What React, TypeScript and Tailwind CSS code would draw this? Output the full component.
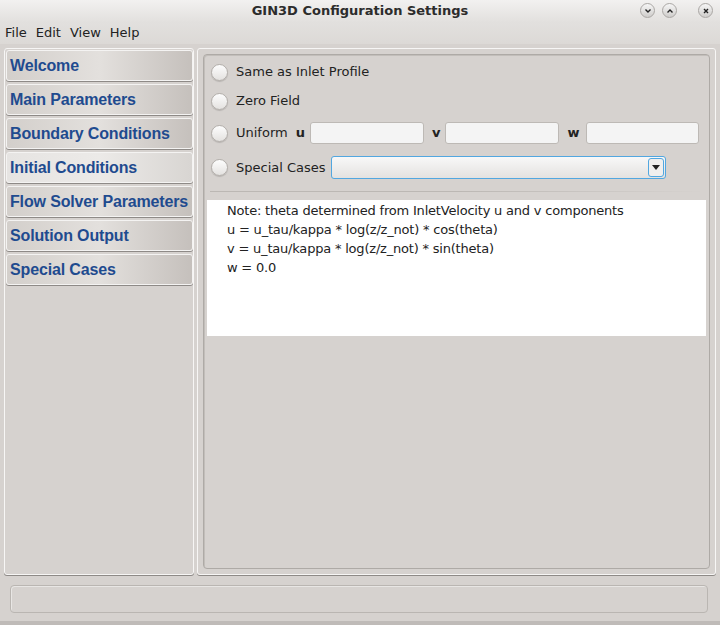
import React from 'react';

const navItems = [
  'Welcome',
  'Main Parameters',
  'Boundary Conditions',
  'Initial Conditions',
  'Flow Solver Parameters',
  'Solution Output',
  'Special Cases',
];

function Radio() {
  return (
    <div className="w-[17px] h-[17px] rounded-full border border-[#b3afab] bg-gradient-to-b from-[#fdfdfd] to-[#e4e2e0] shadow-[0_1px_1px_rgba(0,0,0,0.15)] shrink-0" />
  );
}

function TitleButton({ children }: { children: React.ReactNode }) {
  return (
    <div className="w-[15px] h-[15px] rounded-full bg-gradient-to-b from-[#f6f6f6] to-[#cfcdcb] border border-[#aaa7a4] flex items-center justify-center text-[#222]">
      {children}
    </div>
  );
}

function TextField({ width }: { width: string }) {
  return <div className={`${width} h-[22px] rounded-[3px] border border-[#bdb9b5] bg-[#f4f4f4]`} />;
}

export default function App() {
  return (
    <div
      className="w-[720px] h-[625px] bg-[#d6d2cf] flex flex-col text-[#222] overflow-hidden"
      style={{ fontFamily: '"DejaVu Sans", sans-serif' }}
    >
      {/* title bar */}
      <div className="h-[22px] relative flex items-center justify-center bg-gradient-to-b from-[#f2f1f0] to-[#e2e0de]">
        <span className="text-[13px] font-bold text-[#2c2c2c]">GIN3D Configuration Settings</span>
        <div className="absolute right-[7px] top-[3px] flex items-center">
          <TitleButton>
            <svg width="8" height="8" viewBox="0 0 8 8"><path d="M1.5 2.5 L4 5 L6.5 2.5" stroke="currentColor" strokeWidth="1.4" fill="none" /></svg>
          </TitleButton>
          <div className="w-[7px]" />
          <TitleButton>
            <svg width="8" height="8" viewBox="0 0 8 8"><path d="M1.5 5.5 L4 3 L6.5 5.5" stroke="currentColor" strokeWidth="1.4" fill="none" /></svg>
          </TitleButton>
          <div className="w-[21px]" />
          <TitleButton>
            <svg width="8" height="8" viewBox="0 0 8 8"><path d="M2 2 L6 6 M6 2 L2 6" stroke="currentColor" strokeWidth="1.4" fill="none" /></svg>
          </TitleButton>
        </div>
      </div>

      {/* menu bar */}
      <div className="h-[22px] flex items-center gap-[9px] px-[5px] text-[13px] bg-gradient-to-b from-[#e2e0de] to-[#dcd9d6]">
        <span>File</span>
        <span>Edit</span>
        <span>View</span>
        <span>Help</span>
      </div>

      {/* body */}
      <div className="flex gap-[3px] pt-[4px] px-[4px] h-[531px]">
        {/* left nav */}
        <div className="w-[190px] rounded-[3px] border border-[#f7f6f5] shadow-[0_1px_0_#8e8a87] bg-[#d6d2cf] flex flex-col gap-[3px] pt-[1px] pl-[1px]">
          {navItems.map((item) => (
            <div
              key={item}
              className={`h-[31px] flex items-center pl-[3px] rounded-[3px] border border-[#f4f3f2] shadow-[0_1px_0_#8e8a87] text-[16px] font-bold text-[#1f4b8f] whitespace-nowrap tracking-[-0.15px] ${
                item === 'Initial Conditions'
                  ? 'bg-gradient-to-r from-[#e6e4e2] via-[#eceae8] to-[#d8d5d2]'
                  : 'bg-gradient-to-r from-[#d3cfcb] via-[#e3e0dd] to-[#c5c0bc]'
              }`}
              style={{ fontFamily: '"Liberation Sans", sans-serif' }}
            >
              {item}
            </div>
          ))}
        </div>

        {/* right content */}
        <div className="flex-1 rounded-[3px] border border-[#f7f6f5] shadow-[0_1px_0_#8e8a87] p-[5px]">
          <div className="h-full rounded-[4px] border border-[#aeaaa6] shadow-[inset_1px_1px_0_#c2beba] bg-[#d6d2cf] flex flex-col pt-[8px] px-[4px]">
            <div className="flex items-center gap-[8px] pl-[3px] h-[18px]">
              <Radio />
              <span className="text-[13px]">Same as Inlet Profile</span>
            </div>
            <div className="flex items-center gap-[8px] pl-[3px] h-[18px] mt-[11px]">
              <Radio />
              <span className="text-[13px]">Zero Field</span>
            </div>
            <div className="flex items-center pl-[3px] h-[22px] mt-[12px]">
              <Radio />
              <span className="text-[13px] ml-[8px]">Uniform</span>
              <span className="text-[13px] font-bold ml-[8px] mr-[5px]">u</span>
              <TextField width="w-[114px]" />
              <span className="text-[13px] font-bold ml-[8px] mr-[5px]">v</span>
              <TextField width="w-[114px]" />
              <span className="text-[13px] font-bold ml-[8px] mr-[7px]">w</span>
              <TextField width="w-[113px]" />
            </div>
            <div className="flex items-center pl-[3px] h-[23px] mt-[12px]">
              <Radio />
              <span className="text-[13px] ml-[8px] mr-[5px]">Special Cases</span>
              <div className="w-[335px] h-[23px] rounded-[3px] border border-[#52a7e0] bg-gradient-to-b from-[#f8f8f8] to-[#e4e2e0] flex items-center justify-end">
                <div className="w-[16px] h-[19px] mr-[1px] rounded-[3px] border border-[#52a7e0] bg-[#f0efee] flex items-center justify-center">
                  <svg width="8" height="5" viewBox="0 0 8 5"><path d="M0 0 L8 0 L4 5 Z" fill="#222" /></svg>
                </div>
              </div>
            </div>
            <div className="h-px bg-gradient-to-r from-[#bcb8b4] via-[#bcb8b4] to-[#d6d2cf] mt-[12px] ml-[2px]" />
            <div className="bg-white mt-[8px] h-[136px] -mx-[1px] pl-[20px] pt-[1px] text-[13px] leading-[19px] text-[#222] tracking-[-0.2px]">
              <div>Note: theta determined from InletVelocity u and v components</div>
              <div>u = u_tau/kappa * log(z/z_not) * cos(theta)</div>
              <div>v = u_tau/kappa * log(z/z_not) * sin(theta)</div>
              <div>w = 0.0</div>
            </div>
          </div>
        </div>
      </div>

      {/* status bar */}
      <div className="pl-[10px] pr-[12px] pt-[10px]">
        <div className="h-[28px] rounded-[4px] border border-[#bab6b2] shadow-[inset_1px_1px_0_#e8e6e4]" />
      </div>
      <div className="flex-1" />
      <div className="h-[4px] bg-[#bfbbb8]" />
    </div>
  );
}
